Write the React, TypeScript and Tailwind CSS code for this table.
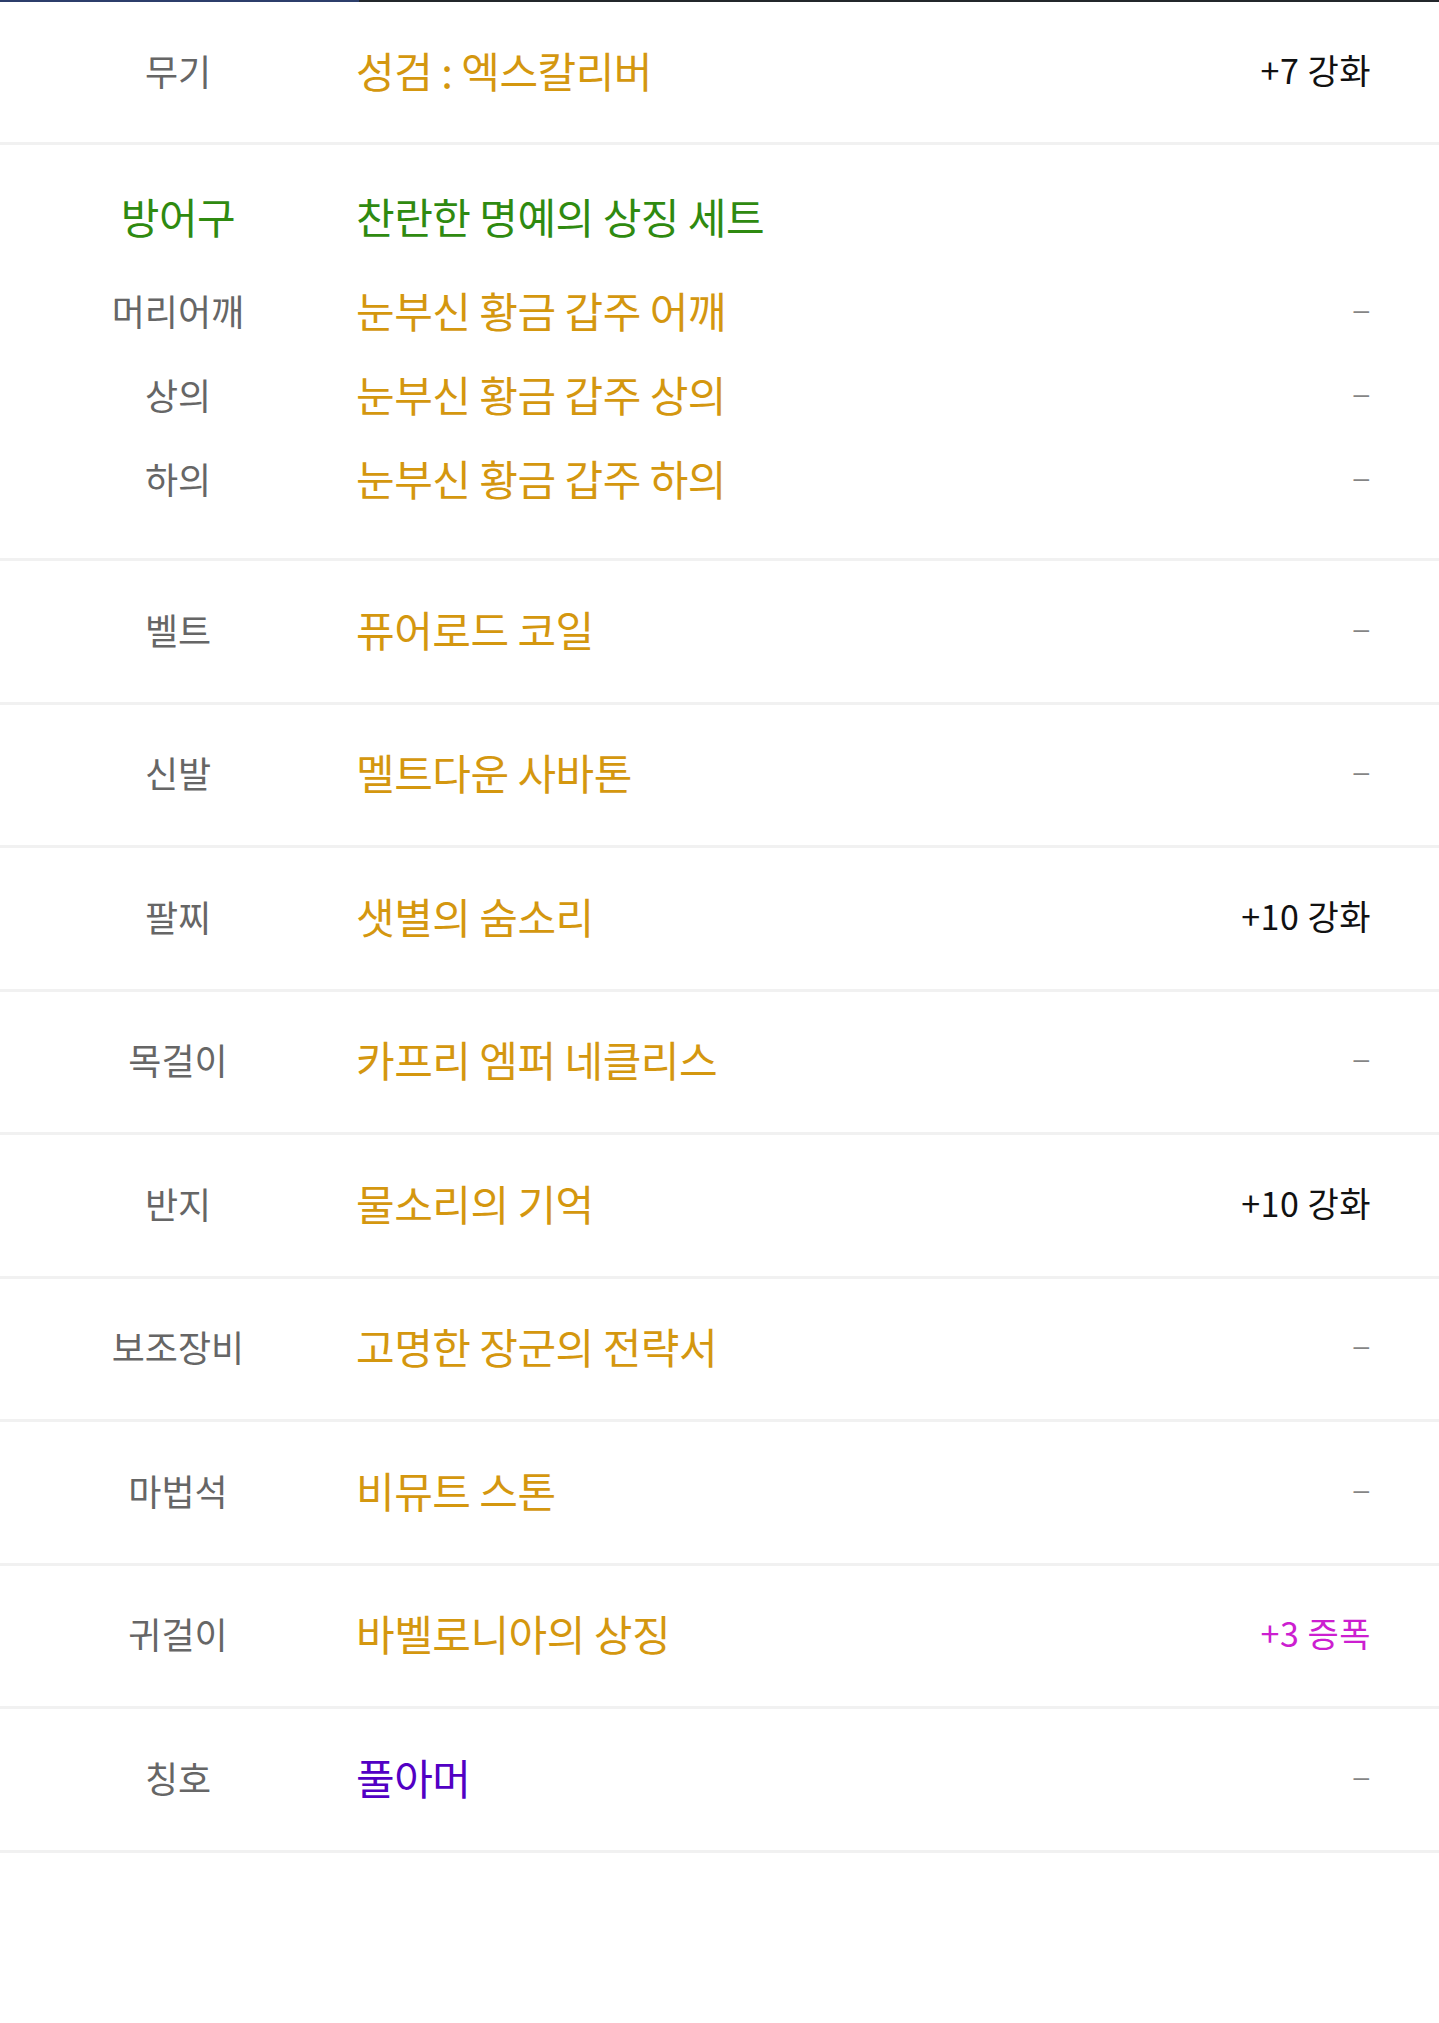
type Tone = "gold" | "green" | "purple";

type Item = {
  slot: string;
  name: string;
  tone?: Tone;
  extra?: string;
  extraTone?: "black" | "magenta";
};

const toneClass: Record<Tone, string> = {
  gold: "text-[#d4970f]",
  green: "text-[#2f8a10]",
  purple: "text-[#5200c4]",
};

const font = "font-['Noto_Sans_CJK_KR','Noto_Sans',sans-serif]";

const armor: Item[] = [
  { slot: "머리어깨", name: "눈부신 황금 갑주 어깨" },
  { slot: "상의", name: "눈부신 황금 갑주 상의" },
  { slot: "하의", name: "눈부신 황금 갑주 하의" },
];

const items: Item[] = [
  { slot: "벨트", name: "퓨어로드 코일" },
  { slot: "신발", name: "멜트다운 사바톤" },
  { slot: "팔찌", name: "샛별의 숨소리", extra: "+10 강화" },
  { slot: "목걸이", name: "카프리 엠퍼 네클리스" },
  { slot: "반지", name: "물소리의 기억", extra: "+10 강화" },
  { slot: "보조장비", name: "고명한 장군의 전략서" },
  { slot: "마법석", name: "비뮤트 스톤" },
  { slot: "귀걸이", name: "바벨로니아의 상징", extra: "+3 증폭", extraTone: "magenta" },
  { slot: "칭호", name: "풀아머", tone: "purple" },
];

function Extra({ item }: { item: Item }) {
  if (!item.extra) {
    return (
      <span className="font-['Liberation_Sans',sans-serif] text-[28px] text-[#858585] mr-[2px]">
        –
      </span>
    );
  }
  return (
    <span
      className={`text-[34px] tracking-[0.5px] ${
        item.extraTone === "magenta" ? "text-[#cc1fd0]" : "text-[#111]"
      }`}
    >
      {item.extra}
    </span>
  );
}

function Row({ item, className }: { item: Item; className: string }) {
  return (
    <div className={`flex items-center ${className}`}>
      <div className="w-[356px] shrink-0 pb-[5px] text-center text-[36px] text-[#666]">
        {item.slot}
      </div>
      <div className={`flex-1 pb-[5px] text-[42px] tracking-[-0.5px] ${toneClass[item.tone ?? "gold"]}`}>
        {item.name}
      </div>
      <div className="pr-[68px] pb-[5px] text-right">
        <Extra item={item} />
      </div>
    </div>
  );
}

export default function App() {
  return (
    <div className={`w-full min-h-[2023px] bg-white ${font} leading-none`}>
      <div className="flex h-[2px]">
        <div className="w-[359px] bg-[#2c3e6b]" />
        <div className="flex-1 bg-[#23272b]" />
      </div>

      <Row
        item={{ slot: "무기", name: "성검 : 엑스칼리버", extra: "+7 강화" }}
        className="h-[140px] border-b-[3px] border-[#f1f1f1] box-content"
      />

      <div className="pt-[31px] pb-[36px] border-b-[3px] border-[#f1f1f1]">
        <div className="flex items-center h-[84px] mb-[10px]">
          <div className="w-[356px] shrink-0 pb-[5px] text-center text-[42px] tracking-[-0.5px] text-[#2f8a10]">
            방어구
          </div>
          <div className="flex-1 pb-[5px] text-[42px] tracking-[-0.5px] text-[#2f8a10]">
            찬란한 명예의 상징 세트
          </div>
        </div>
        {armor.map((a) => (
          <Row key={a.slot} item={a} className="h-[84px]" />
        ))}
      </div>

      {items.map((it) => (
        <Row
          key={it.slot}
          item={it}
          className="h-[140.5px] border-b-[3px] border-[#f1f1f1] box-content"
        />
      ))}
    </div>
  );
}
